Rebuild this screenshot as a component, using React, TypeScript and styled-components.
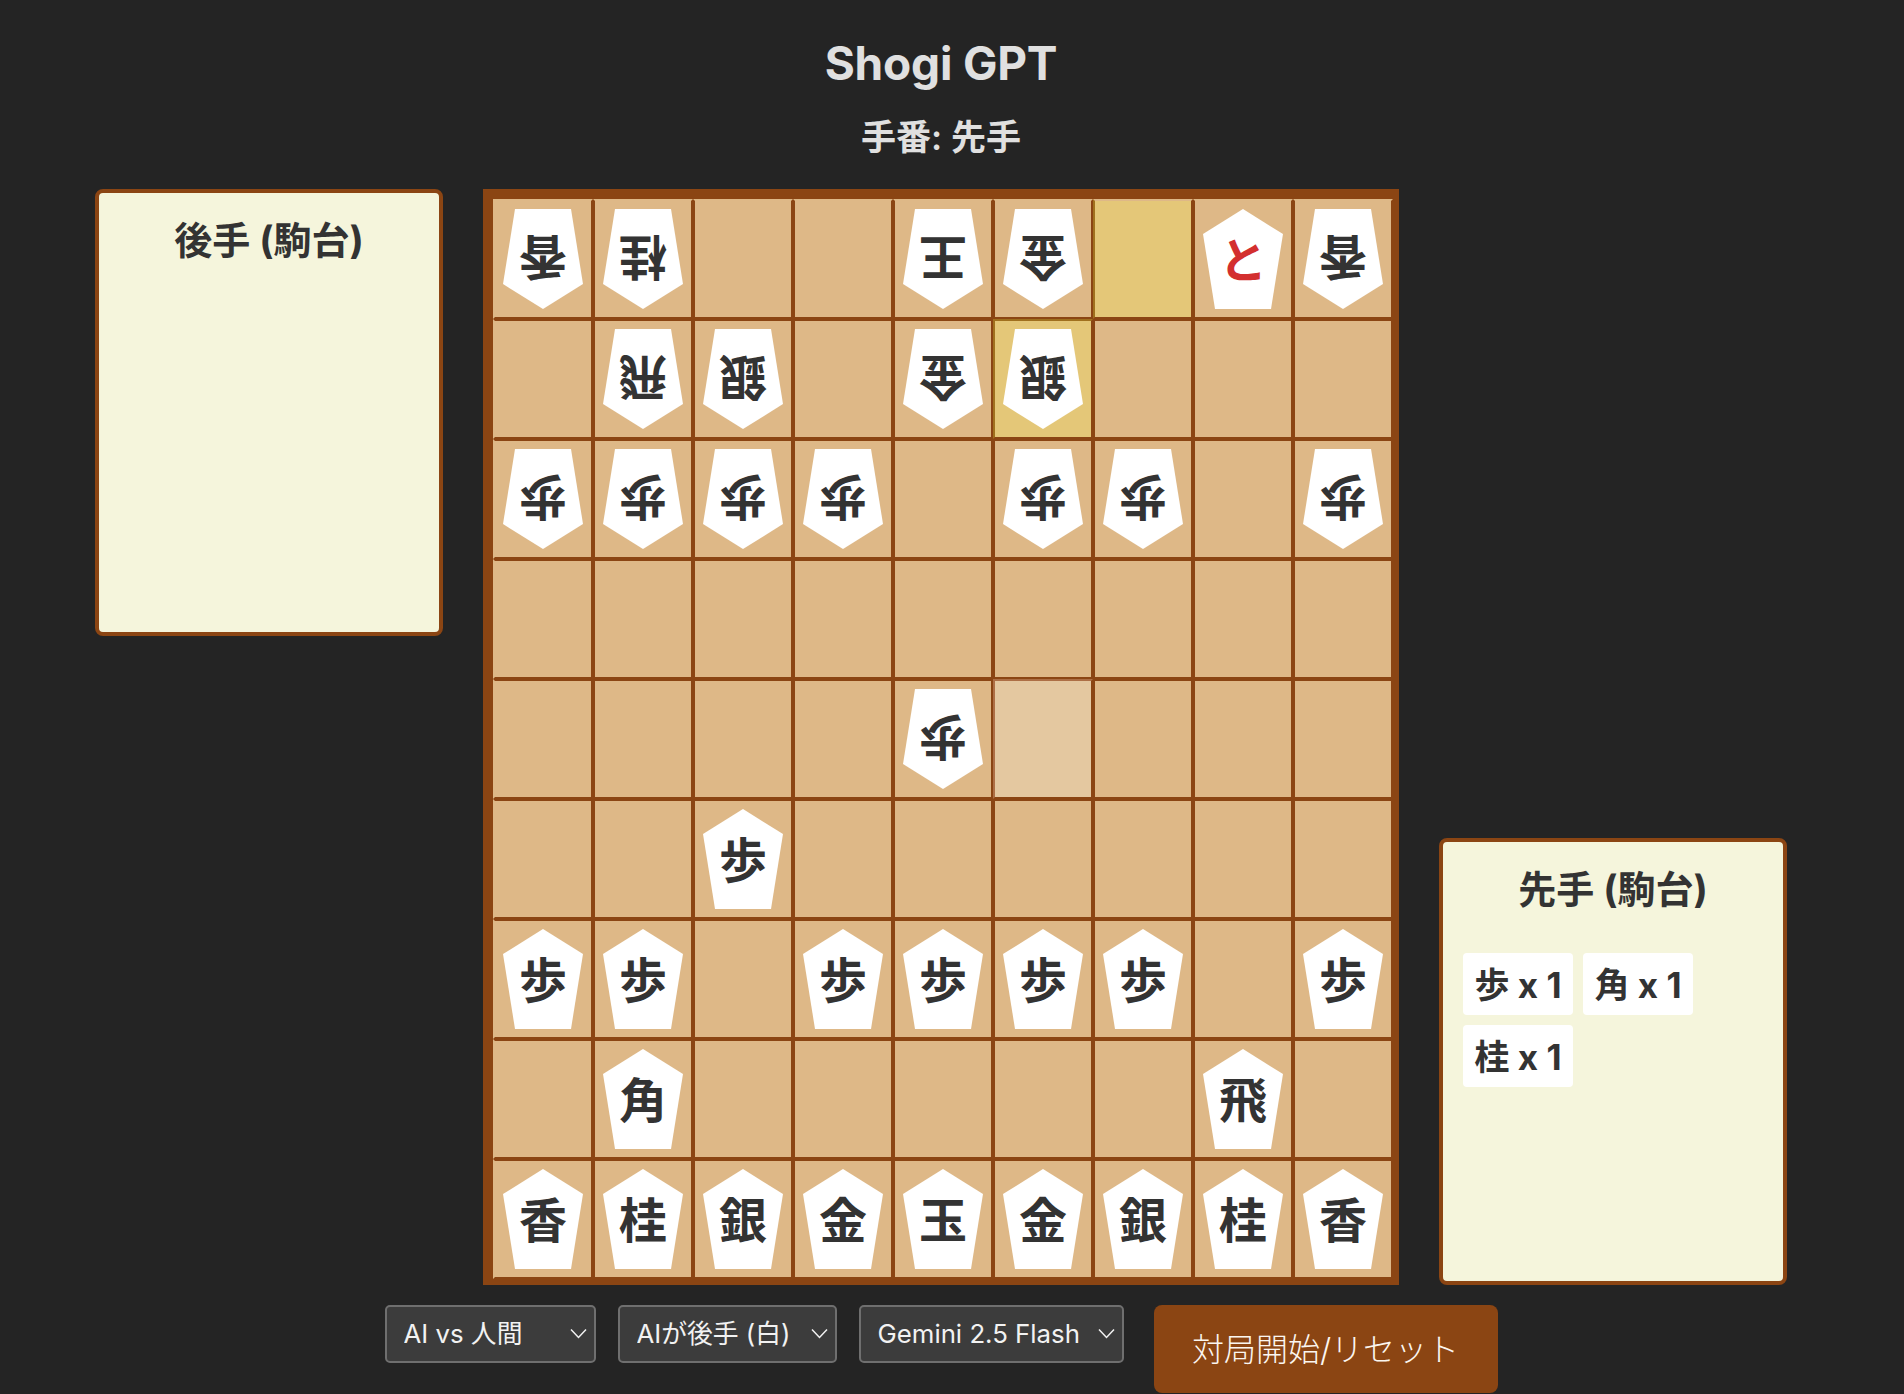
import { FC } from "react";
import styled, { createGlobalStyle } from "styled-components";

const GlobalStyle = createGlobalStyle`
  html, body {
    margin: 0;
    padding: 0;
    background-color: #242424;
  }
  body {
    font-family: Inter, "Noto Sans CJK JP", sans-serif;
  }
`;

const Page = styled.div`
  width: 1882px;
  height: 1394px;
  overflow: hidden;
  display: flex;
  flex-direction: column;
  align-items: center;
  color: #e0e0e0;
`;

const Title = styled.h1`
  margin: 35px 0 0;
  font-size: 46px;
  line-height: 56px;
  font-weight: 700;
  letter-spacing: -0.2px;
`;

const Turn = styled.h2`
  margin: 22px 0 0;
  font-size: 35px;
  line-height: 48px;
  font-weight: 600;
`;

const GameArea = styled.div`
  margin-top: 28px;
  display: flex;
  gap: 40px;
`;

const Komadai = styled.div<{ $bottom?: boolean }>`
  box-sizing: border-box;
  width: 348px;
  height: 447px;
  padding: 20px;
  background-color: #f5f5dc;
  border: 4px solid #8b4513;
  border-radius: 8px;
  color: #333;
  align-self: ${(p) => (p.$bottom ? "flex-end" : "flex-start")};
`;

const KomadaiTitle = styled.h3`
  margin: 3px 0 1px;
  text-align: center;
  font-size: 38px;
  line-height: 48px;
  font-weight: 700;
`;

const Captured = styled.div`
  margin-top: 40px;
  display: flex;
  flex-wrap: wrap;
  gap: 10px;
`;

const CapturedItem = styled.div`
  box-sizing: border-box;
  width: 110px;
  height: 62px;
  padding-bottom: 4px;
  display: flex;
  align-items: center;
  justify-content: center;
  background-color: #fff;
  border-radius: 4px;
  font-size: 35px;
  font-weight: 700;
  white-space: nowrap;
`;

const Board = styled.div`
  display: grid;
  grid-template-columns: repeat(9, 100px);
  grid-template-rows: repeat(9, 120px);
  border-style: solid;
  border-color: #8b4513;
  border-width: 10px 6px 6px 10px;
`;

const fills = { yellow: "#e4c778", light: "#e4c8a0" };
const edges = { yellow: "#a0701e", light: "#ad6f45" };

const Cell = styled.div<{ $mark?: "yellow" | "light"; $firstCol: boolean; $firstRow: boolean }>`
  box-sizing: border-box;
  border: 2px solid #8b4513;
  border-left-color: ${(p) => (p.$firstCol ? "#deb887" : p.$mark ? edges[p.$mark] : "#8b4513")};
  border-top-color: ${(p) => (p.$firstRow ? "#deb887" : p.$mark ? edges[p.$mark] : "#8b4513")};
  display: flex;
  align-items: center;
  justify-content: center;
  background-color: ${(p) => (p.$mark ? fills[p.$mark] : "#deb887")};
`;

const Piece = styled.div<{ $enemy?: boolean; $promoted?: boolean }>`
  box-sizing: border-box;
  width: 80px;
  height: 100px;
  padding-bottom: 5px;
  flex-shrink: 0;
  display: flex;
  align-items: center;
  justify-content: center;
  background-color: #fff;
  clip-path: polygon(50% 0, 100% 25%, 85% 100%, 15% 100%, 0 25%);
  font-family: "Noto Sans CJK JP", sans-serif;
  font-size: 48px;
  font-weight: 700;
  color: ${(p) => (p.$promoted ? "#d32f2f" : "#333")};
  transform: ${(p) => (p.$enemy ? "rotate(180deg)" : "none")};
`;

const Controls = styled.div`
  margin-top: 20px;
  display: flex;
  align-items: flex-start;
  gap: 22px;
`;

const SelectWrap = styled.div`
  position: relative;
  height: 58px;
`;

const Select = styled.select<{ $width: number }>`
  box-sizing: border-box;
  width: ${(p) => p.$width}px;
  height: 58px;
  padding: 0 0 2px 17px;
  appearance: none;
  background-color: #3c3c3c;
  border: 2px solid #6f6f6f;
  border-radius: 5px;
  color: #f2f2f2;
  font-family: Inter, "Noto Sans CJK JP", sans-serif;
  font-size: 25.8px;
  font-weight: 400;
`;

const Chevron = styled.svg`
  position: absolute;
  top: 23px;
  right: 9px;
  width: 17px;
  height: 11px;
  fill: none;
  stroke: #f2f2f2;
  stroke-width: 1.5;
  pointer-events: none;
`;

const StartButton = styled.button`
  width: 344px;
  height: 88px;
  margin-left: 8px;
  padding: 0 0 4px;
  border: none;
  border-radius: 8px;
  background-color: #8b4513;
  color: #fbf6f0;
  font-family: Inter, "Noto Sans CJK JP", sans-serif;
  font-size: 32px;
  font-weight: 300;
`;

type P = { k: string; enemy?: boolean; promoted?: boolean; mark?: "yellow" | "light" } | null;

const e = (k: string): P => ({ k, enemy: true });
const s = (k: string): P => ({ k });
const _ = null;

const rows: P[][] = [
  [e("香"), e("桂"), _, _, e("王"), e("金"), { k: "", mark: "yellow" }, { k: "と", promoted: true }, e("香")],
  [_, e("飛"), e("銀"), _, e("金"), { k: "銀", enemy: true, mark: "yellow" }, _, _, _],
  [e("歩"), e("歩"), e("歩"), e("歩"), _, e("歩"), e("歩"), _, e("歩")],
  [_, _, _, _, _, _, _, _, _],
  [_, _, _, _, e("歩"), { k: "", mark: "light" }, _, _, _],
  [_, _, s("歩"), _, _, _, _, _, _],
  [s("歩"), s("歩"), _, s("歩"), s("歩"), s("歩"), s("歩"), _, s("歩")],
  [_, s("角"), _, _, _, _, _, s("飛"), _],
  [s("香"), s("桂"), s("銀"), s("金"), s("玉"), s("金"), s("銀"), s("桂"), s("香")],
];

const ControlSelect: FC<{ width: number; value: string; options: string[] }> = ({ width, value, options }) => (
  <SelectWrap>
    <Select $width={width} defaultValue={value}>
      {options.map((o) => (
        <option key={o}>{o}</option>
      ))}
    </Select>
    <Chevron viewBox="0 0 17 11">
      <path d="M1 1.5 L8.5 9.5 L16 1.5" />
    </Chevron>
  </SelectWrap>
);

const App: FC = () => {
  return (
    <Page>
      <GlobalStyle />
      <Title>Shogi GPT</Title>
      <Turn>手番: 先手</Turn>
      <GameArea>
        <Komadai>
          <KomadaiTitle>後手 (駒台)</KomadaiTitle>
        </Komadai>
        <Board>
          {rows.flat().map((p, i) => (
            <Cell key={i} $mark={p?.mark} $firstCol={i % 9 === 0} $firstRow={i < 9}>
              {p && p.k && (
                <Piece $enemy={p.enemy} $promoted={p.promoted}>
                  {p.k}
                </Piece>
              )}
            </Cell>
          ))}
        </Board>
        <Komadai $bottom>
          <KomadaiTitle>先手 (駒台)</KomadaiTitle>
          <Captured>
            <CapturedItem>歩 x 1</CapturedItem>
            <CapturedItem>角 x 1</CapturedItem>
            <CapturedItem>桂 x 1</CapturedItem>
          </Captured>
        </Komadai>
      </GameArea>
      <Controls>
        <ControlSelect width={211} value="AI vs 人間" options={["AI vs 人間", "人間 vs 人間"]} />
        <ControlSelect width={219} value="AIが後手 (白)" options={["AIが後手 (白)", "AIが先手 (黒)"]} />
        <ControlSelect width={265} value="Gemini 2.5 Flash" options={["Gemini 2.5 Flash", "Gemini 2.5 Pro"]} />
        <StartButton>対局開始/リセット</StartButton>
      </Controls>
    </Page>
  );
};

export default App;
